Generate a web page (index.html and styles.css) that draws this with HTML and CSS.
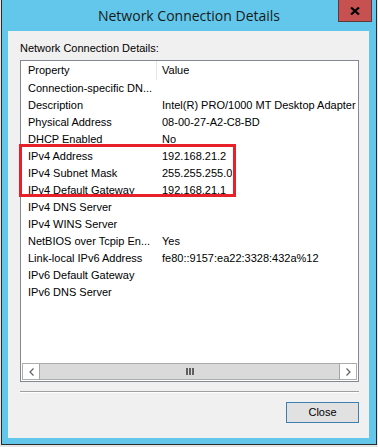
FILE: index.html
```html
<!DOCTYPE html>
<html lang="en">
  <head>
    <meta charset="utf-8"/>
    <title>Network Connection Details</title>
    <link rel="stylesheet" href="styles.css">
  </head>
  <body>
    <div class="window">
      <div class="titlebar">
        <span class="title">Network Connection Details</span>
        <div class="close">
          <svg width="10" height="8" viewBox="0 0 10 8"><path d="M1 0.5 L9 7.5 M9 0.5 L1 7.5" stroke="#000" stroke-width="2.2"/></svg>
        </div>
      </div>
      <div class="client">
        <div class="caption">Network Connection Details:</div>
        <div class="listview">
          <div class="row header">
            <div class="cell prop">Property</div>
            <div class="cell">Value</div>
          </div>
          <div class="rows">
            <div class="row"><div class="cell prop">Connection-specific DN...</div><div class="cell"></div></div>
            <div class="row"><div class="cell prop">Description</div><div class="cell">Intel(R) PRO/1000 MT Desktop Adapter</div></div>
            <div class="row"><div class="cell prop">Physical Address</div><div class="cell">08-00-27-A2-C8-BD</div></div>
            <div class="row"><div class="cell prop">DHCP Enabled</div><div class="cell">No</div></div>
            <div class="row"><div class="cell prop">IPv4 Address</div><div class="cell">192.168.21.2</div></div>
            <div class="row"><div class="cell prop">IPv4 Subnet Mask</div><div class="cell">255.255.255.0</div></div>
            <div class="row"><div class="cell prop">IPv4 Default Gateway</div><div class="cell">192.168.21.1</div></div>
            <div class="row"><div class="cell prop">IPv4 DNS Server</div><div class="cell"></div></div>
            <div class="row"><div class="cell prop">IPv4 WINS Server</div><div class="cell"></div></div>
            <div class="row"><div class="cell prop">NetBIOS over Tcpip En...</div><div class="cell">Yes</div></div>
            <div class="row"><div class="cell prop">Link-local IPv6 Address</div><div class="cell">fe80::9157:ea22:3328:432a%12</div></div>
            <div class="row"><div class="cell prop">IPv6 Default Gateway</div><div class="cell"></div></div>
            <div class="row"><div class="cell prop">IPv6 DNS Server</div><div class="cell"></div></div>
          </div>
          <div class="scrollbar">
            <div class="sb-btn">
              <svg width="5" height="8" viewBox="0 0 5 8"><path d="M4.5 0.5 L1 4 L4.5 7.5" fill="none" stroke="#606060" stroke-width="1.2"/></svg>
            </div>
            <div class="thumb">
              <span class="grip"></span><span class="grip"></span><span class="grip"></span>
            </div>
            <div class="sb-btn">
              <svg width="5" height="8" viewBox="0 0 5 8"><path d="M0.5 0.5 L4 4 L0.5 7.5" fill="none" stroke="#606060" stroke-width="1.2"/></svg>
            </div>
          </div>
        </div>
        <div class="separator"></div>
        <div class="buttons">
          <div class="button">Close</div>
        </div>
      </div>
      <div class="highlight"></div>
    </div>
  </body>
</html>
```

FILE: styles.css
```css
body {
  margin: 0;
  background: #e6e6e6;
  font-family: "Liberation Sans", Arial, sans-serif;
  font-size: 11px;
  color: #000;
}
.window {
  position: relative;
  margin-left: 1px;
  width: 376px;
  height: 445px;
  box-sizing: border-box;
  background: #62c7ea;
  border: 1px solid #2b2b2b;
  border-top: none;
}
.titlebar {
  height: 31px;
  display: grid;
  grid-template-columns: 1fr auto 1fr;
}
.title {
  grid-column: 2;
  font-family: "Open Sans", "Noto Sans", sans-serif;
  font-size: 14px;
  line-height: 31px;
  color: #1a1a1a;
  white-space: nowrap;
}
.close {
  grid-column: 3;
  justify-self: end;
  margin-right: 4px;
  width: 34px;
  height: 22px;
  box-sizing: border-box;
  background: #c75050;
  border: 1px solid #5a3a3a;
  border-top: none;
  display: flex;
  align-items: center;
  justify-content: center;
}
.client {
  margin-left: 6px;
  width: 361px;
  height: 407px;
  box-sizing: border-box;
  background: #f0f0f0;
  padding: 11px 10px 0 12px;
}
.caption {
  line-height: 13px;
  height: 13px;
  margin-bottom: 5px;
}
.listview {
  height: 322px;
  box-sizing: border-box;
  border: 1px solid #828790;
  background: #fff;
  display: flex;
  flex-direction: column;
}
.rows {
  flex: 1;
}
.row {
  display: flex;
  height: 17px;
  line-height: 17px;
  white-space: nowrap;
}
.row.header {
  height: 19px;
  line-height: 19px;
}
.cell {
  padding-left: 5px;
  overflow: hidden;
}
.prop {
  width: 136px;
  flex: none;
  padding-left: 7px;
  box-sizing: border-box;
}
.header .prop {
  border-right: 1px solid #e5e5e5;
}
.scrollbar {
  height: 17px;
  margin: 0 1px 1px 1px;
  box-sizing: border-box;
  border: 1px solid #acacac;
  display: flex;
}
.sb-btn {
  width: 16px;
  flex: none;
  background: #fff;
  display: flex;
  align-items: center;
  justify-content: center;
}
.thumb {
  flex: 1;
  background: #dadada;
  border-left: 1px solid #a6a6a6;
  border-right: 1px solid #a6a6a6;
  display: flex;
  align-items: center;
  justify-content: center;
  gap: 1px;
}
.grip {
  width: 2px;
  height: 7px;
  background: #606060;
}
.separator {
  margin-top: 9px;
  height: 1px;
  border-top: 1px solid #a0a0a0;
  background: #fff;
}
.buttons {
  display: flex;
  justify-content: flex-end;
  margin-top: 9px;
}
.button {
  width: 73px;
  height: 21px;
  box-sizing: border-box;
  border: 1px solid #3c7fb1;
  background: #e1e1e1;
  text-align: center;
  line-height: 19px;
}
.highlight {
  position: absolute;
  left: 17px;
  top: 144px;
  width: 217px;
  height: 53px;
  box-sizing: border-box;
  border: 3px solid #e8202a;
}
```
